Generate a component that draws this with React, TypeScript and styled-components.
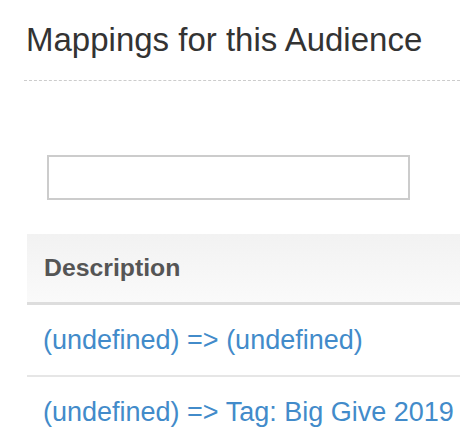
import styled, { createGlobalStyle } from 'styled-components';

const GlobalStyle = createGlobalStyle`
  html, body {
    margin: 0;
    padding: 0;
    background: #fff;
    overflow: hidden;
  }
  body {
    font-family: "Liberation Sans", Arial, Helvetica, sans-serif;
    color: #333;
  }
`;

const Page = styled.div`
  width: 460px;
  height: 445px;
  padding-left: 24px;
  box-sizing: border-box;
  overflow: hidden;
`;

const Title = styled.h3`
  margin: 0;
  padding: 20px 0 20px 2px;
  font-size: 33px;
  line-height: 40px;
  font-weight: 400;
  color: #333;
  border-bottom: 1px dashed #ccc;
  white-space: nowrap;
`;

const Filter = styled.input`
  display: block;
  margin: 74px 0 0 23px;
  width: 363px;
  height: 45px;
  box-sizing: border-box;
  border: 2px solid #ccc;
  background: #fff;
  outline: none;
`;

const Table = styled.table`
  margin: 34px 0 0 3px;
  width: 520px;
  border-collapse: collapse;
`;

const HeadCell = styled.th`
  height: 68px;
  padding: 0 17px;
  text-align: left;
  vertical-align: middle;
  font-size: 24.8px;
  font-weight: 700;
  color: #555;
  background: linear-gradient(#f2f2f2, #fafafa);
  border-bottom: 3px solid #ddd;
`;

const Cell = styled.td<{ $last?: boolean }>`
  height: 70px;
  padding: 0 16px;
  vertical-align: middle;
  font-size: 27px;
  white-space: nowrap;
  border-bottom: ${p => (p.$last ? 'none' : '2px solid #e6e6e6')};
`;

const Link = styled.a`
  color: #428bca;
  text-decoration: none;
`;

const rows = [
  '(undefined) => (undefined)',
  '(undefined) => Tag: Big Give 2019',
];

export default function App() {
  return (
    <Page>
      <GlobalStyle />
      <Title>Mappings for this Audience</Title>
      <Filter type="text" />
      <Table>
        <thead>
          <tr>
            <HeadCell>Description</HeadCell>
          </tr>
        </thead>
        <tbody>
          {rows.map((r, i) => (
            <tr key={i}>
              <Cell $last={i === rows.length - 1}>
                <Link href="#">{r}</Link>
              </Cell>
            </tr>
          ))}
        </tbody>
      </Table>
    </Page>
  );
}
